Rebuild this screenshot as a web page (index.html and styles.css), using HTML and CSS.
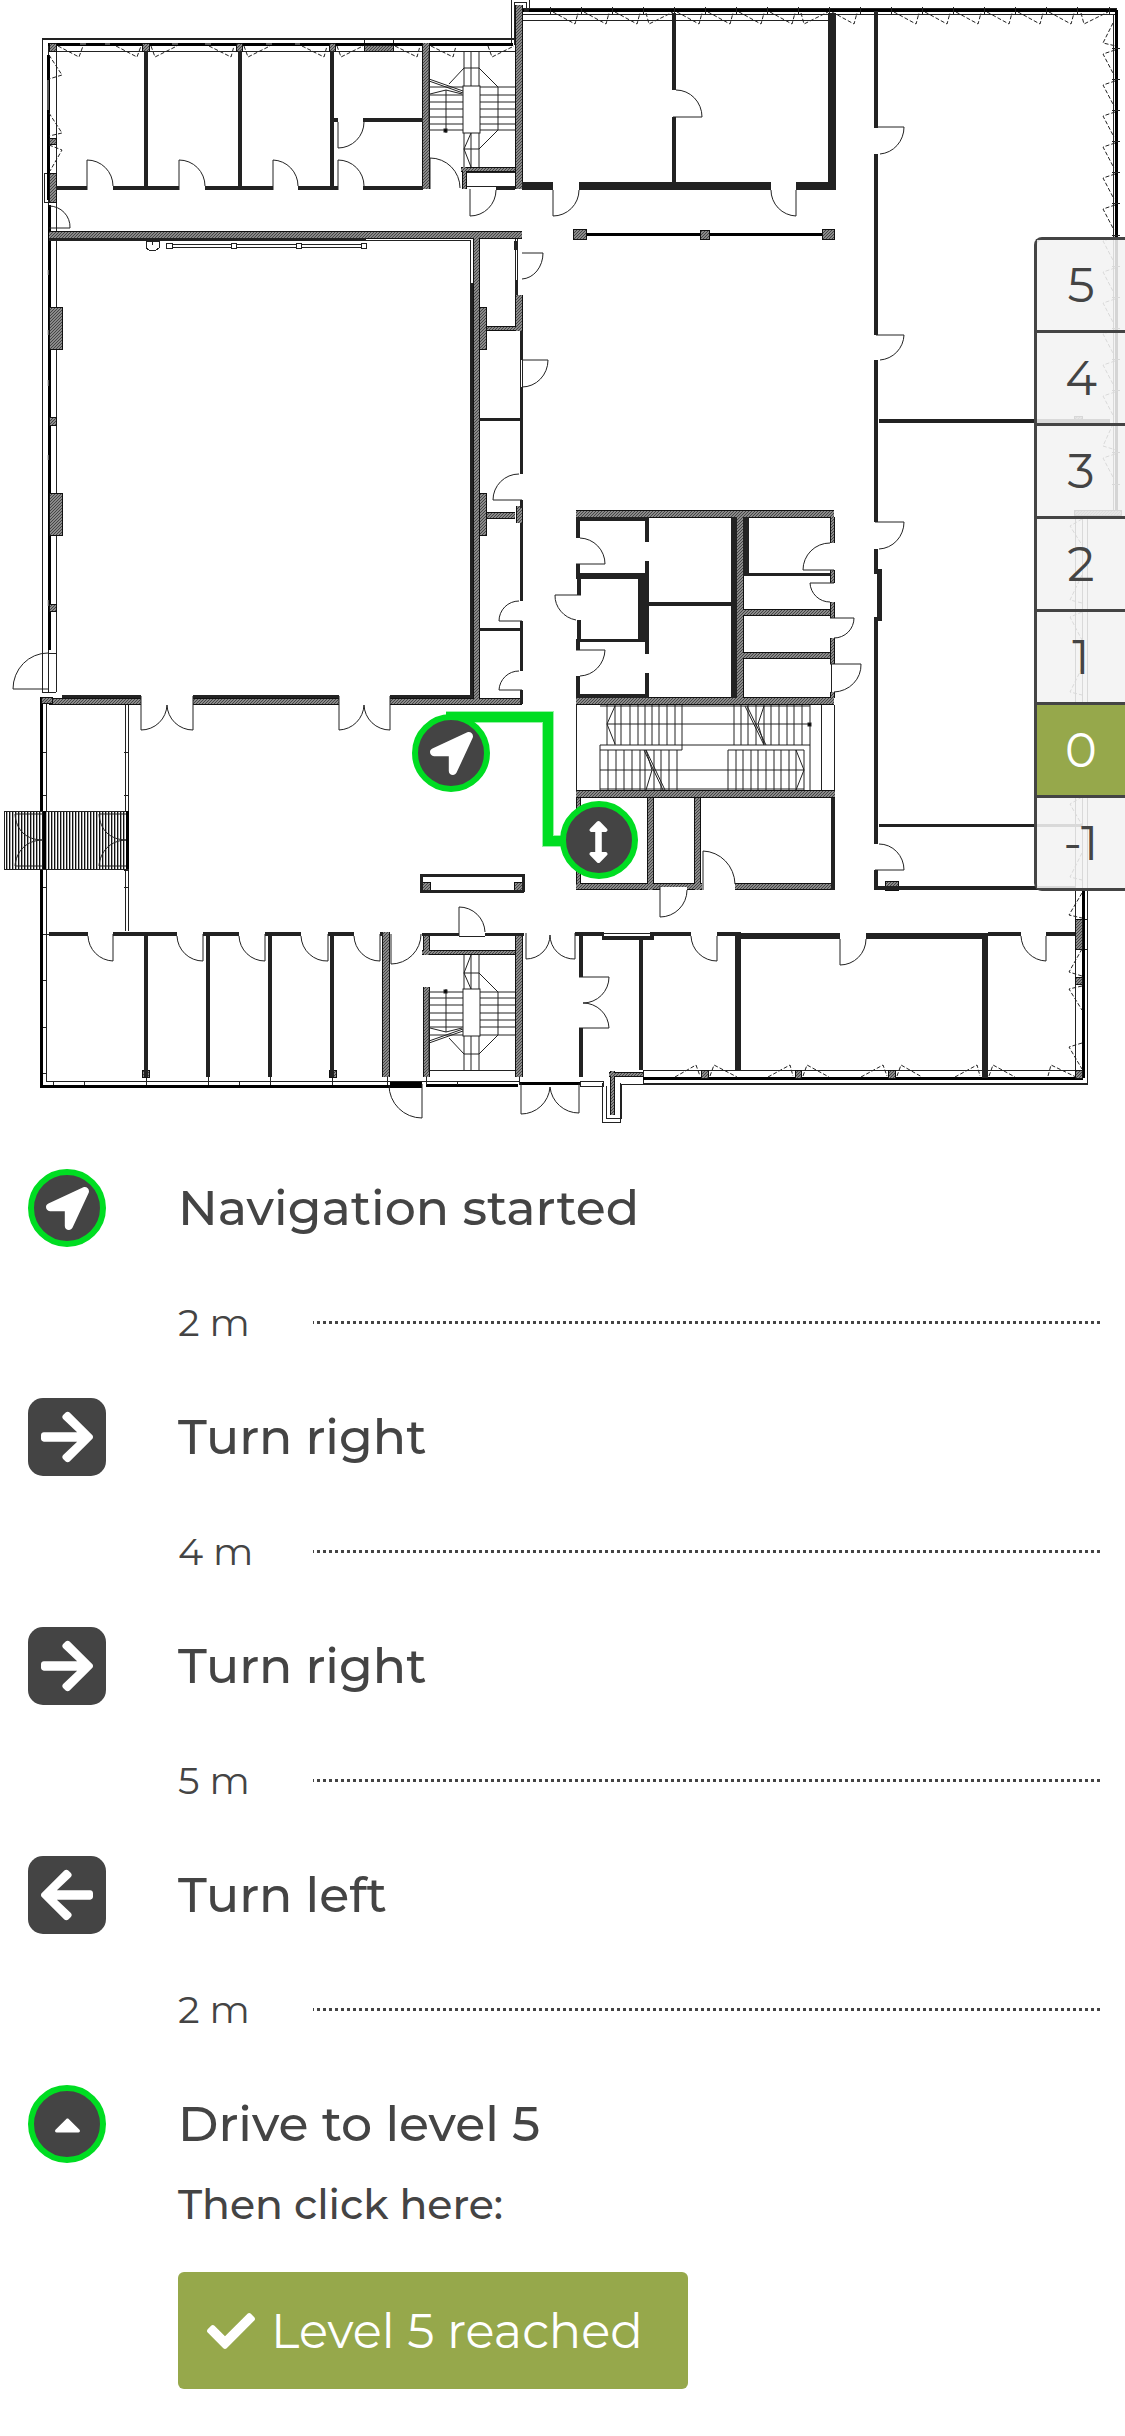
FILE: index.html
```html
<!DOCTYPE html>
<html lang="en">
<head>
<meta charset="utf-8">
<meta name="viewport" content="width=device-width, initial-scale=1">
<title>Indoor navigation</title>
<link rel="stylesheet" href="styles.css">
</head>
<body>
<main>
  <section class="map" aria-label="Floor plan, level 0">
    <svg class="plan" viewBox="0 0 1125 1130" role="img" aria-label="Floor plan with route">
      <defs>
        <pattern id="hatch" width="3" height="3" patternUnits="userSpaceOnUse">
          <rect width="3" height="3" fill="#8a8a8a"/>
          <path d="M0 3L3 0" stroke="#444" stroke-width="1"/>
        </pattern>
        <pattern id="grate" width="3" height="4" patternUnits="userSpaceOnUse">
          <rect width="3" height="4" fill="#fff"/>
          <rect width="1" height="4" fill="#111"/>
          <rect x="1" width="1" height="4" fill="#aaa"/>
        </pattern>
        <path id="flap" d="M3 2L25 14L28 3"/>
        <path id="flap-m" d="M3 3L6 14L30 2"/>
        <path id="flap-v" d="M12 0L0 4L11 25"/>
        <g id="stairs">
          <path d="M464 51V86M471 51V86M479 51V86M464 133V167M471 133V167M479 133V167"/>
          <path d="M480 87H515M480 95H515M480 102H515M480 109H515M480 117H515M480 124H515M480 130H515"/>
          <path d="M429 87H463M429 95H463M429 102H463M429 109H463M429 117H463M429 124H463M429 130H463"/>
          <path d="M449 84L464 68H479L498 87V130L479 149H464L471 133M464 149L471 167M429 79L463 91M429 81L463 93M430 94L446 90L462 94M446 90V133M429 51V130"/>
          <rect x="463" y="86" width="17" height="47" fill="#fff"/>
          <rect x="444" y="129" width="3" height="3" fill="#000"/>
        </g>
        <path id="grey8" d="M49 235H522M576 514H834M576 701H834M576 794H835M740 517V698M519 5V189M519 295V331M386 932V1077M519 933V1077M426 43V189"/>
        <path id="grey7" d="M49 701H141M193 701H339M390 701H522M476 238V704M650 798V890M697 798V890M576 886H702M735 886H835M743 612H830M743 655H830M486 515H515M519 506V523M426 987V1077M426 933V955"/>
        <path id="grey5" d="M461 169H515M464 167V189M486 328H520M422 952H515M609 1074H643M612 1071V1115M832 517V543M832 570V583M832 602V618M832 638V664M832 692V698M578 798V884"/>
      </defs>

      <!-- outer facade lines -->
      <g class="thin">
        <path d="M42 692V38H515M42 39H515M56 43V692M50 51H515M48 43V692M511 45V0M514 45V2H526V10M529 10V0M523 14H1116M522 20H829M523 8H1116V510M1113 14V510"/>
        <path d="M46 704V1081H520M128 704V931M125 704V931M41 752H46M41 795H46M41 887H46M124 752H129M124 795H129M124 870H129M124 887H129M41 934H49M41 980H46M41 1027H46M41 1073H46"/>
        <path d="M1075 515V1078M1087 515V1084H621V1118H606V1086M1082 515V1078M643 1070H1082M643 1083H1087M602 1083V1122H620V1083M643 1070V1084M429 1070H515M390 1082H422M520 1082H580M580 1081H603V1086H580Z"/>
        <path d="M364 51V38H393V51M44 173V202M44 173H49M44 202H49M1087 919H1082M1087 949H1082"/>
        <path d="M366 240H470V283M48 653H56M42 692H56M479 326V238M515 238V296M517 238V296M520 360V387M522 360V387M479 704V238M467 172H515M467 186H515M496 186V189"/>
        <path d="M576 705V790M834 705V790M821 705V790M831 664V692M877 574V617M660 886H687M604 933H650M459 936H485"/>
      </g>
      <g class="bar">
        <path d="M48 44H513M523 10H1116M1116 10V510M41 697V1086H422M426 1085H518M643 1078H1083M1083 890V1078M586 234H822M390 1083H422M520 1083H580M48 55V200M49 205V650"/>
      </g>
      <path class="gaps" d="M80 44H86M105 44H110M172 44H178M205 44H211M266 44H272M295 44H300M48 80V110M48 270V275M48 330V335M48 380V386M48 455V460M48 600V606"/>
      <path class="thin" d="M550 7V14M581 7V14M612 7V14M643 7V14M674 7V14M705 7V14M736 7V14M767 7V14M798 7V14M829 7V14M860 7V14M891 7V14M922 7V14M953 7V14M984 7V14M1015 7V14M1046 7V14M1077 7V14M1109 7V14M1112 48H1120M1112 79H1120M1112 110H1120M1112 141H1120M1112 172H1120M1112 203H1120M1112 235H1120M1112 266H1120M1112 297H1120M1112 328H1120M1112 359H1120M1112 390H1120M1112 452H1120M1112 484H1120M53 1081V1085M84 1081V1085M146 1077V1085M208 1077V1085M239 1081V1085M270 1077V1085M332 1077V1085M387 1077V1085M426 1077V1085M457 1081V1085M519 1077V1085"/>

      <!-- window swings -->
      <g class="swing">
        <use href="#flap" x="550" y="10"/><use href="#flap" x="581" y="10"/><use href="#flap" x="612" y="10"/><use href="#flap-m" x="643" y="10"/>
        <use href="#flap" x="674" y="10"/><use href="#flap" x="705" y="10"/><use href="#flap" x="736" y="10"/><use href="#flap" x="767" y="10"/><use href="#flap-m" x="798" y="10"/>
        <use href="#flap" x="829" y="10"/><use href="#flap" x="891" y="10"/><use href="#flap" x="922" y="10"/><use href="#flap" x="953" y="10"/><use href="#flap" x="984" y="10"/><use href="#flap" x="1015" y="10"/><use href="#flap" x="1046" y="10"/><use href="#flap-m" x="1078" y="10"/>
        <use href="#flap-v" x="1103" y="50"/><use href="#flap-v" x="1103" y="81"/><use href="#flap-v" x="1103" y="112"/><use href="#flap-v" x="1103" y="143"/><use href="#flap-v" x="1103" y="174"/><use href="#flap-v" x="1103" y="205"/><use href="#flap-v" x="1103" y="237"/><use href="#flap-v" x="1103" y="268"/><use href="#flap-v" x="1103" y="299"/><use href="#flap-v" x="1103" y="330"/><use href="#flap-v" x="1103" y="361"/><use href="#flap-v" x="1103" y="392"/><use href="#flap-v" x="1103" y="454"/>
        <path d="M1113 23L1103 43L1116 46M1113 424L1103 446L1116 450M58 46L79 57L83 46M116 46L137 57L141 46M151 46L155 57L177 46M209 46L231 57L234 46M244 46L248 57L270 46M302 46L324 57L327 46M337 46L341 57L363 46M395 46L417 57L420 46M431 46L453 57L456 46M488 46L492 57L514 46"/>
        <path d="M49 55L62 75L49 79M49 113L62 133L49 136M49 145L62 150L50 171"/>
        <path d="M1082 893L1069 915L1082 918M1082 949L1069 972L1082 976M1082 986L1069 989L1082 1010M1082 1043L1069 1047L1082 1069M1082 519L1070 526L1082 545M1082 575L1070 600L1082 603M1082 612L1070 617L1082 640M1082 668L1070 692L1082 695M1082 797L1070 804L1082 825M1082 853L1070 877L1082 880"/>
        <path d="M675 1077L696 1065L700 1076M710 1076L714 1065L737 1077M768 1077L790 1065L793 1076M803 1076L807 1065L829 1077M861 1077L883 1065L887 1076M897 1076L901 1065L922 1077M955 1077L977 1065L980 1076M989 1076L993 1065L1015 1077M1048 1076L1051 1065L1076 1077"/>
      </g>

      <!-- concrete walls: black edge with hatched core -->
      <g class="edge"><use href="#grey8" stroke-width="8"/><use href="#grey7" stroke-width="7"/><use href="#grey5" stroke-width="5"/></g>
      <g class="core"><use href="#grey8" stroke-width="6"/><use href="#grey7" stroke-width="5"/><use href="#grey5" stroke-width="3"/></g>
      <path class="pier" d="M49 43h7v8h-7zM142 43h7v8h-7zM236 43h6v8h-6zM329 43h6v8h-6zM364 45h29v6h-29zM49 138h7v6h-7zM49 173h7v29h-7zM49 307h13v42h-13zM49 417h7v8h-7zM49 493h13v42h-13zM49 604h7v7h-7zM479 307h7v42h-7zM479 493h7v42h-7zM41 697h11v6h-11zM573 229h13v10h-13zM700 230h9v9h-9zM822 229h12v10h-12zM422 882h8v9h-8zM514 882h9v9h-9zM142 1070h7v7h-7zM329 1070h7v7h-7zM701 1070h7v8h-7zM795 1070h6v8h-6zM888 1070h7v8h-7zM1075 1070h7v8h-7zM1075 977h7v7h-7zM1075 919h7v30h-7zM885 881h13v9h-13zM1074 510h47v5h-47zM1074 416h8v7h-8z"/>

      <!-- partition walls -->
      <g class="dark">
        <path stroke-width="3" d="M471 283V698M49 239H366M62 696H141M193 696H339M390 696H471M524 10H529M515 241V250M516 280V295M521 331V360M521 387V474M479 419H520M521 500V508M521 523V601M479 629H520M521 621V671M521 690V704M743 574H830M879 825H1082M576 640H649M420 875H524M420 891H524M421 874V892M523 874V892M496 188H515M422 934H459M485 934H524"/>
        <path stroke-width="4" d="M146 51V187M240 51V187M332 51V187M56 188H87M113 188H179M205 188H273M298 188H338M363 188H423M334 120H338M363 120H423M674 13V90M674 117V183M876 11V128M876 154V335M876 360V522M876 549V574M876 617V844M880 569V621M879 421H1110M49 934H88M113 934H177M203 934H239M265 934H301M328 934H354M380 934H383M146 936V1077M208 936V1077M270 936V1077M332 936V1077M575 934H604M650 934H691M717 934H741M988 934H1021M1046 934H1075M602 938H654M581 936V977M581 1028V1077M641 939V1070M876 870V890M874 888H1075M833 798V890"/>
        <path stroke-width="4" d="M578 517V538M578 564V575M579 576V595M579 620V640M578 642V650M578 676V698M576 519H649M576 696H649M647 517V542M647 561V573M647 641V654M647 673V698M649 604H731"/>
        <path stroke-width="6" d="M734 517V698M746 517V575M985 936V1078M576 576H648M738 936V1070M741 936H840M866 936H988"/>
        <path stroke-width="8" d="M522 186H553M579 186H771M796 186H835M832 13V190"/>
        <path stroke-width="11" d="M643 573V641"/>
      </g>
      <path class="knock" d="M660 887h27v3h-27zM459 934h26v2h-26z"/>

      <!-- doors -->
      <g class="thin smooth">
        <path d="M87 190V160A26 26 0 0 1 113 186M179 190V160A26 26 0 0 1 205 186M273 190V160A26 26 0 0 1 298 186M338 190V160A26 26 0 0 1 364 186M338 122V148A26 26 0 0 0 364 122M430 189V158A30 30 0 0 1 460 188M470 189V216A26 26 0 0 0 496 190M49 206A21 21 0 0 1 70 228H49M48 653A35 36 0 0 0 13 689H48"/>
        <path d="M141 696V730A26 26 0 0 0 167 705A26 26 0 0 0 193 730V696M339 696V730A26 26 0 0 0 364 705A26 26 0 0 0 390 730V696"/>
        <path d="M522 253H543A22 26 0 0 1 522 279M522 360H548A26 27 0 0 1 522 387M519 474A26 26 0 0 0 493 500H522M519 601A20 20 0 0 0 499 621H522M519 671A20 20 0 0 0 499 690H522"/>
        <path d="M676 90A26 27 0 0 1 702 117H673M553 190V216A26 26 0 0 0 579 190M796 190V216A26 26 0 0 1 771 190M876 127H904A26 27 0 0 1 880 154M876 335H904A26 26 0 0 1 880 360M875 522H904A26 27 0 0 1 879 549M879 844A25 26 0 0 1 904 870H875"/>
        <path d="M580 538A26 26 0 0 1 605 564H576M581 595H555A26 25 0 0 0 576 620M576 650H605A26 27 0 0 1 580 676M830 543A27 27 0 0 0 803 570H834M834 583H810A20 20 0 0 0 830 602M830 618H854A20 20 0 0 1 834 638M830 664H861A28 27 0 0 1 834 692M703 890V851A33 34 0 0 1 735 884M660 886V917A27 27 0 0 0 687 890"/>
        <path d="M113 934V961A26 26 0 0 1 88 936M203 934V961A26 26 0 0 1 177 936M265 934V961A26 26 0 0 1 239 936M328 934V961A26 26 0 0 1 301 936M380 934V961A26 26 0 0 1 354 936M391 934V964A30 30 0 0 0 421 934M459 936V907A26 26 0 0 1 485 932"/>
        <path d="M526 933V959A24 24 0 0 0 550 935A24 24 0 0 0 575 959V933M717 936V961A26 26 0 0 1 691 936M840 939V965A26 26 0 0 0 866 939M1046 936V961A26 26 0 0 1 1021 936M579 977H609A26 26 0 0 1 583 1003A26 26 0 0 1 609 1028H579M422 1084V1118A33 33 0 0 1 389 1085M521 1083V1114A29 29 0 0 0 550 1087A29 29 0 0 0 579 1113V1083"/>
      </g>

      <!-- stairwells -->
      <g class="thin smooth">
        <use href="#stairs"/>
        <use href="#stairs" transform="translate(0 1122) scale(1 -1)"/>
        <path d="M600 706H810M607 724H810M600 745H810V790M600 745V790M600 750H682M728 750H804V790M600 770H804M600 789H804"/>
        <path d="M607 705V745M615 705V745M621 705V745M630 705V745M638 705V745M645 705V745M652 705V745M659 705V745M667 705V745M675 705V745M682 705V750M734 705V745M741 705V745M748 705V745M756 705V745M764 705V745M771 705V745M779 705V745M787 705V745M794 705V745M802 705V745M810 705V745"/>
        <path d="M608 750V790M616 750V790M624 750V790M632 750V790M640 750V790M645 750V790M654 750V790M661 750V790M669 750V790M677 750V790M728 750V790M736 750V790M743 750V790M751 750V790M758 750V790M766 750V790M774 750V790M781 750V790M789 750V790M796 750V790"/>
        <path d="M615 706L607 724L615 744M764 706L758 724L764 744M745 706L764 745M747 706L766 745M646 750L665 790M644 750L663 790M646 750L652 770L646 790M796 750L804 770L796 790"/>
        <rect x="808" y="723" width="3" height="3" fill="#000"/>
      </g>

      <!-- whiteboard, sink and entrance grating -->
      <g class="thin">
        <path d="M166 244H364M166 247H364"/>
        <path fill="#fff" d="M166 243h6v5h-6zM231 243h5v5h-5zM296 243h5v5h-5zM361 243h5v5h-5zM146 241h13v7l-3 2h-7l-3-2zM152 241v4"/>
        <rect x="4" y="811" width="124" height="58" fill="url(#grate)"/>
        <path class="smooth" d="M15 814H43M15 866H43M15 814C16 830 26 840 43 840C26 840 16 852 15 866M99 814H127M99 866H127M99 814C100 830 110 840 127 840C110 840 100 852 99 866"/>
      </g>
      <path class="bar" d="M44 811V869M127 811V869"/>

      <!-- route and markers -->
      <path class="route-halo" d="M446 717H548V841H600"/>
      <path class="route" d="M446 717H548V841H600"/>
      <g class="marker">
        <circle cx="451" cy="753" r="36"/>
        <svg x="430" y="732" width="43" height="43" viewBox="0 0 512 512"><path d="M444.52 3.52L28.74 195.42c-47.97 22.39-31.98 92.75 19.19 92.75h175.91v175.91c0 51.17 70.36 67.17 92.75 19.19l191.9-415.78c15.99-38.39-25.59-79.97-63.97-63.97z"/></svg>
        <circle cx="599" cy="840" r="36"/>
        <svg x="588" y="821" width="21" height="42" viewBox="0 0 256 512"><path d="M214.059 377.941H168V134.059h46.059c21.382 0 32.09-25.851 16.971-40.971L144.971 7.029c-9.373-9.373-24.568-9.373-33.941 0L24.971 93.088c-15.119 15.119-4.411 40.971 16.971 40.971H88v243.882H41.941c-21.382 0-32.09 25.851-16.971 40.971l86.059 86.059c9.373 9.373 24.568 9.373 33.941 0l86.059-86.059c15.12-15.119 4.412-40.971-16.97-40.971z"/></svg>
      </g>
    </svg>

    <nav class="levels" aria-label="Level">
      <button class="level" type="button">5</button>
      <button class="level" type="button">4</button>
      <button class="level" type="button">3</button>
      <button class="level" type="button">2</button>
      <button class="level" type="button">1</button>
      <button class="level level-active" type="button" aria-current="true">0</button>
      <button class="level" type="button">-1</button>
    </nav>
  </section>

  <ol class="steps">
    <li class="step">
      <span class="badge badge-round"><svg class="icon-location" viewBox="0 0 512 512" aria-hidden="true"><path d="M444.52 3.52L28.74 195.42c-47.97 22.39-31.98 92.75 19.19 92.75h175.91v175.91c0 51.17 70.36 67.17 92.75 19.19l191.9-415.78c15.99-38.39-25.59-79.97-63.97-63.97z"/></svg></span>
      <h2 class="title">Navigation started</h2>
      <div class="distance"><span class="metres">2 m</span><span class="dots"></span></div>
    </li>
    <li class="step">
      <span class="badge"><svg class="icon-arrow" viewBox="0 0 448 512" aria-hidden="true"><path d="M190.5 66.9l22.2-22.2c9.4-9.4 24.6-9.4 33.9 0L441 239c9.4 9.4 9.4 24.6 0 33.9L246.6 467.3c-9.4 9.4-24.6 9.4-33.9 0l-22.2-22.2c-9.5-9.5-9.3-25 .4-34.3L311.4 296H24c-13.3 0-24-10.7-24-24v-32c0-13.3 10.7-24 24-24h287.4L190.9 101.2c-9.8-9.3-10-24.8-.4-34.3z"/></svg></span>
      <h2 class="title">Turn right</h2>
      <div class="distance"><span class="metres">4 m</span><span class="dots"></span></div>
    </li>
    <li class="step">
      <span class="badge"><svg class="icon-arrow" viewBox="0 0 448 512" aria-hidden="true"><path d="M190.5 66.9l22.2-22.2c9.4-9.4 24.6-9.4 33.9 0L441 239c9.4 9.4 9.4 24.6 0 33.9L246.6 467.3c-9.4 9.4-24.6 9.4-33.9 0l-22.2-22.2c-9.5-9.5-9.3-25 .4-34.3L311.4 296H24c-13.3 0-24-10.7-24-24v-32c0-13.3 10.7-24 24-24h287.4L190.9 101.2c-9.8-9.3-10-24.8-.4-34.3z"/></svg></span>
      <h2 class="title">Turn right</h2>
      <div class="distance"><span class="metres">5 m</span><span class="dots"></span></div>
    </li>
    <li class="step">
      <span class="badge"><svg class="icon-arrow" viewBox="0 0 448 512" aria-hidden="true"><path d="M257.5 445.1l-22.2 22.2c-9.4 9.4-24.6 9.4-33.9 0L7 273c-9.4-9.4-9.4-24.6 0-33.9L201.4 44.7c9.4-9.4 24.6-9.4 33.9 0l22.2 22.2c9.5 9.5 9.3 25-.4 34.3L136.6 216H424c13.3 0 24 10.7 24 24v32c0 13.3-10.7 24-24 24H136.6l120.5 114.8c9.8 9.3 10 24.8.4 34.3z"/></svg></span>
      <h2 class="title">Turn left</h2>
      <div class="distance"><span class="metres">2 m</span><span class="dots"></span></div>
    </li>
    <li class="step">
      <span class="badge badge-round"><svg class="icon-caret" viewBox="0 0 320 512" aria-hidden="true"><path d="M288.662 352H31.338c-17.818 0-26.741-21.543-14.142-34.142l128.662-128.662c7.81-7.81 20.474-7.81 28.284 0l128.662 128.662c12.6 12.599 3.676 34.142-14.142 34.142z"/></svg></span>
      <h2 class="title">Drive to level 5</h2>
      <div class="confirm">
        <p class="hint">Then click here:</p>
        <button class="reached" type="button"><svg class="icon-check" viewBox="0 0 512 512" aria-hidden="true"><path d="M173.898 439.404l-166.4-166.4c-9.997-9.997-9.997-26.206 0-36.204l36.203-36.204c9.997-9.998 26.207-9.998 36.204 0L192 312.69 432.095 72.596c9.997-9.997 26.207-9.997 36.204 0l36.203 36.204c9.997 9.997 9.997 26.206 0 36.204l-294.4 294.401c-9.998 9.997-26.207 9.997-36.204-.001z"/></svg><span>Level 5 reached</span></button>
      </div>
    </li>
  </ol>
</main>
</body>
</html>
```
FILE: styles.css
```css
* { box-sizing: border-box; }

body {
  margin: 0;
  background: #fff;
  color: #444;
  font-family: Montserrat, Inter, "Open Sans", sans-serif;
}

button { font: inherit; color: inherit; cursor: pointer; }

/* Map */
.map { position: relative; }
.plan { display: block; width: 100%; height: auto; }
.thin { fill: none; stroke: #222; stroke-width: 1; shape-rendering: crispEdges; }
.smooth { shape-rendering: auto; }
.bar { fill: none; stroke: #000; stroke-width: 3; shape-rendering: crispEdges; }
.gaps { fill: none; stroke: #aaa; stroke-width: 1; }
.swing { fill: none; stroke: #222; stroke-width: 1; stroke-dasharray: 4 2; }
.edge { fill: none; stroke: #111; shape-rendering: crispEdges; }
.core { fill: none; stroke: url(#hatch); shape-rendering: crispEdges; }
.pier { fill: url(#hatch); stroke: #111; stroke-width: 1; shape-rendering: crispEdges; }
.dark { fill: none; stroke: #222; shape-rendering: crispEdges; }
.knock { fill: #fff; }
.route { fill: none; stroke: #00dd22; stroke-width: 10; }
.route-halo { fill: none; stroke: #00dd22; stroke-width: 12; opacity: .4; }
.marker circle { fill: #444; stroke: #00dd22; stroke-width: 6; }
.marker path { fill: #fff; }

.levels {
  position: absolute;
  top: 237px;
  right: 0;
  width: 91px;
  display: flex;
  flex-direction: column;
  gap: 3px;
  border: 3px solid #444;
  border-right: 0;
  border-radius: 8px 0 0 8px;
}
.level {
  height: 90px;
  padding: 0;
  border: 0;
  background: rgba(242, 242, 242, .88);
  box-shadow: 0 3px #444;
  font-size: 48px;
  line-height: 90px;
  text-align: center;
}
.level:last-child { box-shadow: none; }
.level-active { background: #96a84b; color: #fff; }

/* Directions */
.steps {
  list-style: none;
  margin: 0;
  padding: 39px 25px 47px 28px;
}
.step {
  display: grid;
  grid-template-columns: 78px 1fr;
  column-gap: 72px;
  align-items: center;
}
.badge {
  width: 78px;
  height: 78px;
  display: flex;
  align-items: center;
  justify-content: center;
  border-radius: 15px;
  background: #444;
}
.badge-round { border: 6px solid #00dd22; border-radius: 50%; }
.badge svg, .icon-check { fill: #fff; }
.icon-location { width: 43px; height: 43px; }
.icon-arrow { width: 52px; height: 60px; }
.icon-caret { width: 27px; height: 43px; }
.icon-check { width: 48px; height: 48px; }

.title { margin: 0; font-size: 49px; line-height: 78px; font-weight: 500; }
.distance {
  grid-column: 2;
  display: flex;
  align-items: center;
  height: 151px;
}
.metres { width: 135px; font-size: 38px; }
.dots {
  flex: 1;
  height: 3px;
  background: repeating-linear-gradient(270deg, #444 0 3px, transparent 3px 6px);
}
.confirm { grid-column: 2; }
.hint { margin: 17px 0 44px; font-size: 41px; line-height: 48px; font-weight: 500; }
.reached {
  display: flex;
  align-items: center;
  gap: 16px;
  padding: 0 45px 0 29px;
  height: 117px;
  border: 0;
  border-radius: 6px;
  background: #96a84b;
  color: #fff;
  font-size: 48px;
}
```
